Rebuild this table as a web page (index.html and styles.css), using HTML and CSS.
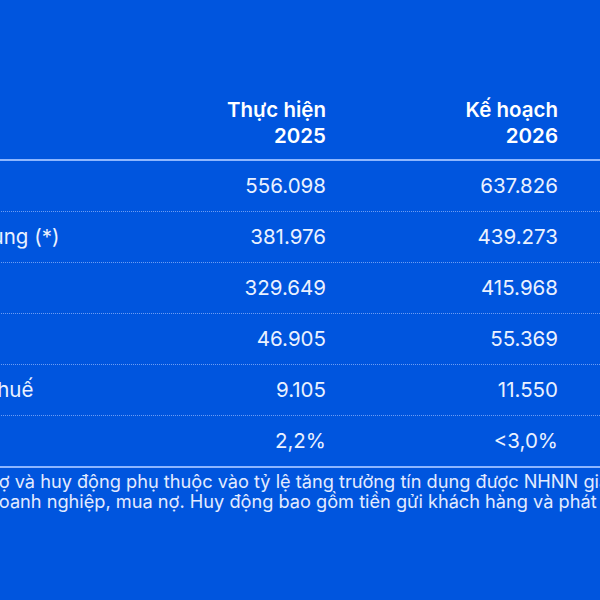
FILE: index.html
```html
<!DOCTYPE html>
<html lang="vi">
<head>
<meta charset="utf-8">
<link rel="stylesheet" href="styles.css">
</head>
<body>
<main class="page">
  <section class="plan">
    <div class="row head">
      <div class="label"></div>
      <div class="num">Thực hiện<br>2025</div>
      <div class="num">Kế hoạch<br>2026</div>
    </div>
    <div class="row">
      <div class="label">Tổng tài sản</div>
      <div class="num">556.098</div>
      <div class="num">637.826</div>
    </div>
    <div class="row">
      <div class="label">Tổng dư nợ tín dụng (*)</div>
      <div class="num">381.976</div>
      <div class="num">439.273</div>
    </div>
    <div class="row">
      <div class="label">Huy động</div>
      <div class="num">329.649</div>
      <div class="num">415.968</div>
    </div>
    <div class="row">
      <div class="label">Tổng thu nhập</div>
      <div class="num">46.905</div>
      <div class="num">55.369</div>
    </div>
    <div class="row">
      <div class="label">Lợi nhuận trước thuế</div>
      <div class="num">9.105</div>
      <div class="num">11.550</div>
    </div>
    <div class="row last">
      <div class="label">Tỷ lệ nợ xấu</div>
      <div class="num">2,2%</div>
      <div class="num">&lt;3,0%</div>
    </div>
    <div class="note">
      <p>(*) Tăng trưởng dư nợ và huy động phụ thuộc vào tỷ lệ tăng trưởng tín dụng được NHNN giao. Dư nợ bao gồm cho vay, cấp</p>
      <p class="cont">tín dụng, trái phiếu doanh nghiệp, mua nợ. Huy động bao gồm tiền gửi khách hàng và phát hành giấy tờ có giá.</p>
    </div>
  </section>
</main>
</body>
</html>
```
FILE: styles.css
```css
html, body {
  margin: 0;
  padding: 0;
  background: #0055de;
  overflow: hidden;
}
body {
  width: 600px;
  height: 600px;
  font-family: Inter, "Noto Sans", sans-serif;
  color: #eaf1ff;
}
.page {
  padding-top: 97px;
}
.plan {
  margin-left: -166px;
  width: 830px;
}
.row {
  display: grid;
  grid-template-columns: 366px 126px 232px;
  padding: 12px 0;
  border-bottom: 1px dotted #6d9cf2;
  font-size: 20.5px;
  line-height: 26px;
}
.row.head {
  padding: 0 0 10px;
  border-bottom: 2px solid #8db6ff;
  font-weight: 600;
  color: #ffffff;
}
.row.last {
  border-bottom: 2px solid #8db6ff;
}
.num {
  text-align: right;
}
.label {
  white-space: nowrap;
}
.note {
  margin-left: -10px;
  padding-top: 3px;
  font-size: 18.2px;
  line-height: 20px;
  color: #e3ebff;
}
.note p {
  margin: 0;
  white-space: nowrap;
}
.note .cont {
  margin-left: -2px;
}
```
